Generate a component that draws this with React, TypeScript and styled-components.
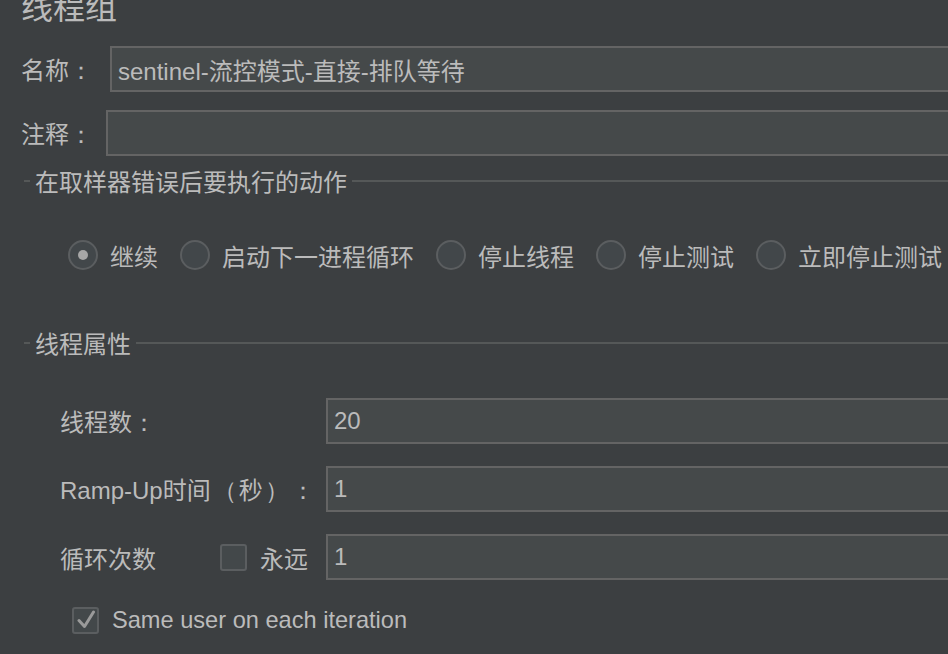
import React from "react";
import styled, { createGlobalStyle } from "styled-components";

const Global = createGlobalStyle`
  html, body { margin: 0; padding: 0; background: #3c3f41; }
  body { overflow: hidden; }
  #root { width: 948px; height: 654px; overflow: hidden; }
`;

const Page = styled.div`
  width: 948px;
  height: 654px;
  overflow: hidden;
  background: #3c3f41;
  color: #bbbbbb;
  font-family: "Liberation Sans", "Noto Sans CJK SC", sans-serif;
  font-size: 24px;
  display: flex;
  flex-direction: column;
`;

const Title = styled.div`
  font-size: 32px;
  line-height: 32px;
  margin-top: -11px;
  padding-left: 21px;
  font-family: "Noto Sans CJK SC", sans-serif;
`;

const FieldRow = styled.div<{ $top: number; $labelWidth: number }>`
  display: grid;
  grid-template-columns: ${(p) => p.$labelWidth}px 1fr;
  align-items: center;
  margin-top: ${(p) => p.$top}px;
  padding-left: 21px;
  margin-right: -20px;
`;

const Label = styled.span`
  white-space: nowrap;
  font-family: "Liberation Sans", "Noto Sans CJK SC", sans-serif;
`;

const Punct = styled.span<{ $pad?: number }>`
  display: inline-block;
  width: 1em;
  text-align: center;
  padding: 0 ${(p) => p.$pad ?? 0}px;
  font-family: "Liberation Sans", sans-serif;
`;

const Input = styled.div`
  box-sizing: border-box;
  height: 46px;
  border: 2px solid #646464;
  background: #45494a;
  display: flex;
  align-items: center;
  padding-left: 6px;
  white-space: nowrap;
  color: #bbbbbb;
`;

const GroupHeader = styled.div<{ $top: number }>`
  display: flex;
  align-items: center;
  height: 30px;
  margin-top: ${(p) => p.$top}px;
  padding-left: 24px;
  &::before {
    content: "";
    width: 6px;
    height: 2px;
    background: #555858;
  }
  &::after {
    content: "";
    flex: 1;
    height: 2px;
    background: #555858;
  }
`;

const GroupTitle = styled.span`
  padding: 0 5px;
  line-height: 30px;
  font-family: "Noto Sans CJK SC", sans-serif;
`;

const RadioRow = styled.div`
  display: flex;
  align-items: center;
  height: 30px;
  margin-top: 44px;
  padding-left: 68px;
  white-space: nowrap;
`;

const RadioItem = styled.label`
  display: flex;
  align-items: center;
  gap: 12px;
  margin-right: 22px;
  font-family: "Noto Sans CJK SC", sans-serif;
`;

const RadioCircle = styled.span<{ $checked?: boolean }>`
  box-sizing: border-box;
  width: 30px;
  height: 30px;
  border-radius: 50%;
  border: 2px solid #5b5e60;
  background: #42474a;
  display: flex;
  align-items: center;
  justify-content: center;
  flex: none;
  &::after {
    content: "";
    display: ${(p) => (p.$checked ? "block" : "none")};
    width: 10px;
    height: 10px;
    border-radius: 50%;
    background: #a7a7a7;
  }
`;

const PropRow = styled.div<{ $top: number }>`
  display: grid;
  grid-template-columns: 266px 1fr;
  align-items: center;
  margin-top: ${(p) => p.$top}px;
  padding-left: 60px;
  margin-right: -20px;
`;

const LoopLabel = styled.div`
  display: flex;
  align-items: center;
  font-family: "Noto Sans CJK SC", sans-serif;
`;

const LoopText = styled.span`
  width: 160px;
`;

const CheckBox = styled.span`
  box-sizing: border-box;
  width: 27px;
  height: 27px;
  border: 2px solid #5b5e60;
  border-radius: 3px;
  background: #43484a;
  display: flex;
  align-items: center;
  justify-content: center;
  flex: none;
`;

const CheckLabel = styled.span<{ $gap: number }>`
  margin-left: ${(p) => p.$gap}px;
`;

const SameUserRow = styled.div`
  display: flex;
  align-items: center;
  height: 30px;
  margin-top: 25px;
  padding-left: 72px;
  white-space: nowrap;
  font-size: 23.6px;
`;

const Check = () => (
  <svg width="20" height="20" viewBox="0 0 20 20">
    <path d="M3 10.5 L8.5 16.5 L17.5 2" fill="none" stroke="#9a9a9a" strokeWidth="3" strokeLinejoin="round" strokeLinecap="round" />
  </svg>
);

export default function App() {
  const options = ["继续", "启动下一进程循环", "停止线程", "停止测试", "立即停止测试"];
  return (
    <Page>
      <Global />
      <Title>线程组</Title>
      <FieldRow $top={25} $labelWidth={89}>
        <Label>
          名称<Punct>：</Punct>
        </Label>
        <Input>sentinel-流控模式-直接-排队等待</Input>
      </FieldRow>
      <FieldRow $top={18} $labelWidth={85}>
        <Label>
          注释<Punct>：</Punct>
        </Label>
        <Input />
      </FieldRow>
      <GroupHeader $top={10}>
        <GroupTitle>在取样器错误后要执行的动作</GroupTitle>
      </GroupHeader>
      <RadioRow>
        {options.map((o, i) => (
          <RadioItem key={o}>
            <RadioCircle $checked={i === 0} />
            {o}
          </RadioItem>
        ))}
      </RadioRow>
      <GroupHeader $top={58}>
        <GroupTitle>线程属性</GroupTitle>
      </GroupHeader>
      <PropRow $top={40}>
        <Label>
          线程数<Punct>：</Punct>
        </Label>
        <Input>20</Input>
      </PropRow>
      <PropRow $top={22}>
        <Label>
          Ramp-Up时间<Punct $pad={2}>（</Punct>秒<Punct $pad={2}>）</Punct>
          <Punct>：</Punct>
        </Label>
        <Input>1</Input>
      </PropRow>
      <PropRow $top={22}>
        <LoopLabel>
          <LoopText>循环次数</LoopText>
          <CheckBox />
          <CheckLabel $gap={13}>永远</CheckLabel>
        </LoopLabel>
        <Input>1</Input>
      </PropRow>
      <SameUserRow>
        <CheckBox>
          <Check />
        </CheckBox>
        <CheckLabel $gap={13}>Same user on each iteration</CheckLabel>
      </SameUserRow>
    </Page>
  );
}
